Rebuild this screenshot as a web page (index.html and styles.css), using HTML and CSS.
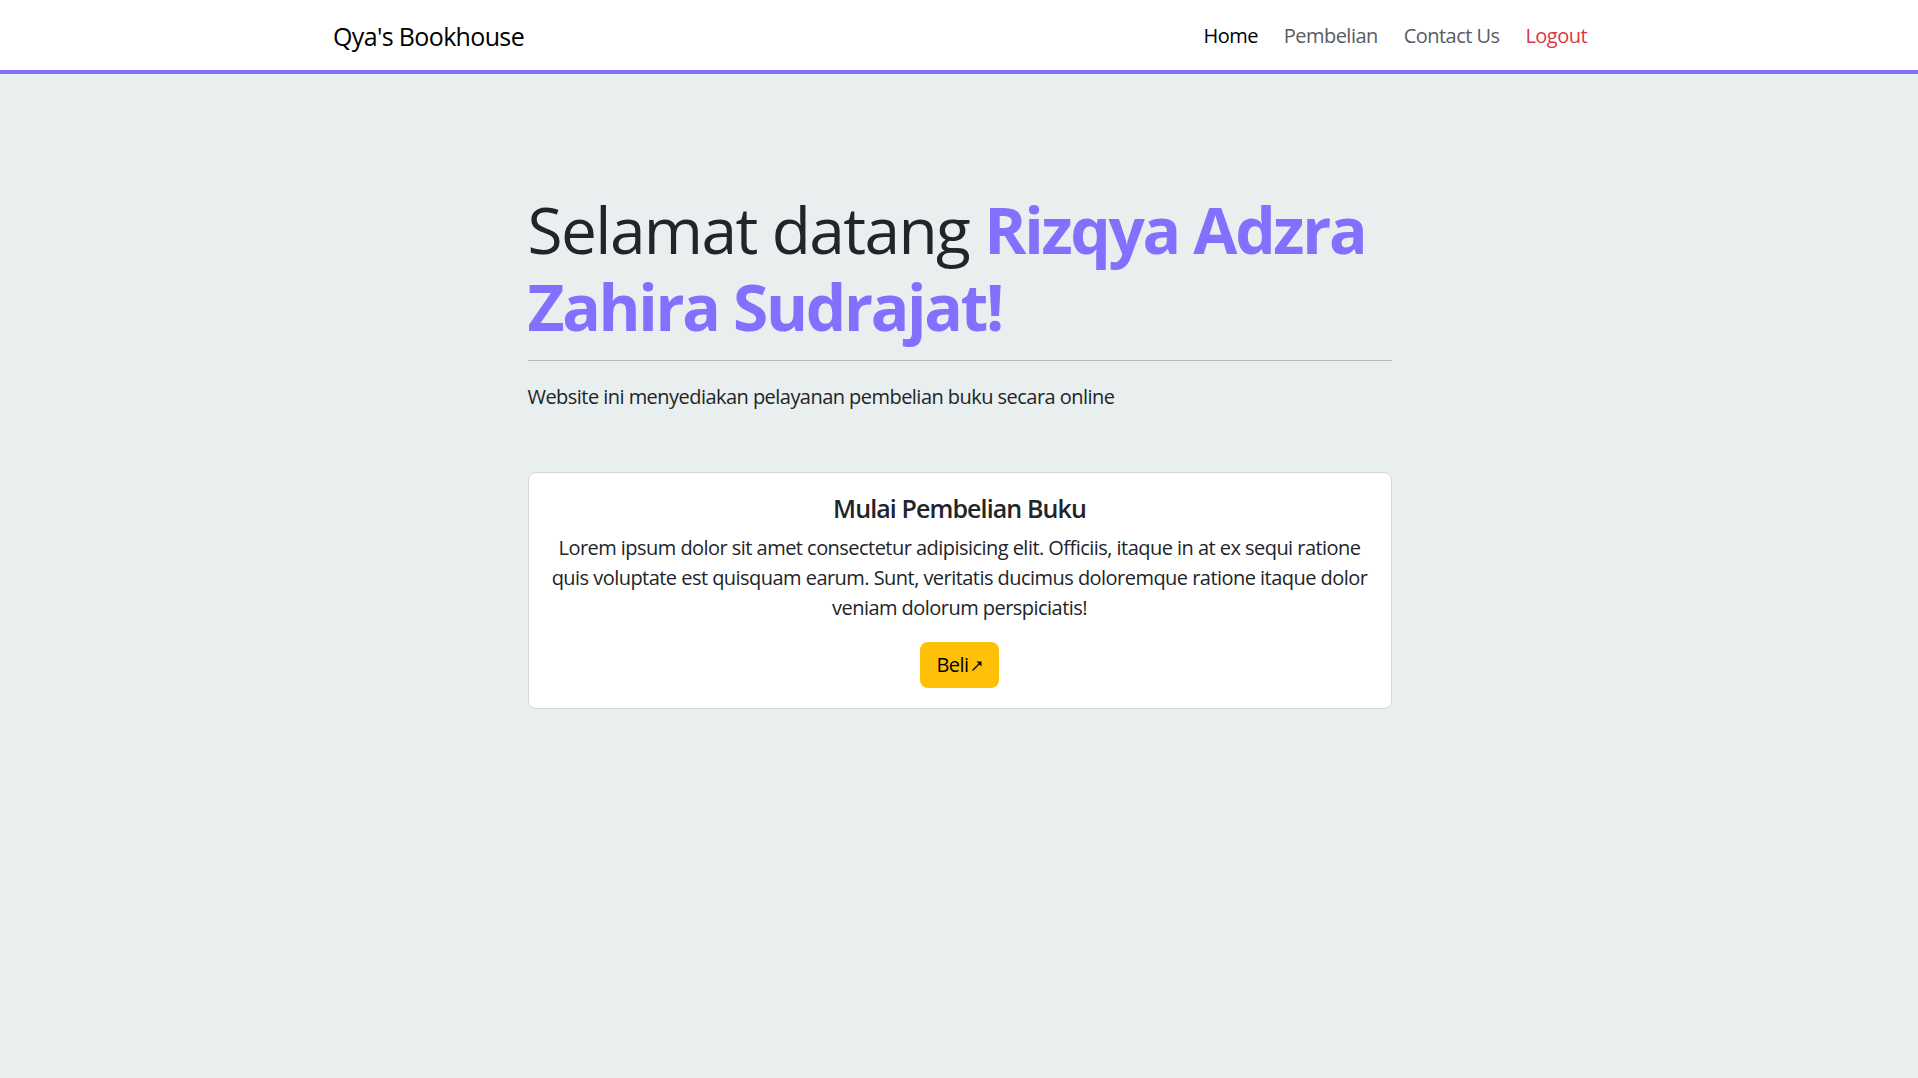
FILE: index.html
```html
<!DOCTYPE html>
<html lang="id">
<head>
<meta charset="utf-8">
<title>Qya's Bookhouse</title>
<link rel="stylesheet" href="styles.css">
</head>
<body>
<nav class="navbar">
  <div class="nav-container">
    <a class="brand" href="#">Qya's Bookhouse</a>
    <ul class="nav-links">
      <li><a class="nav-link active" href="#">Home</a></li>
      <li><a class="nav-link" href="#">Pembelian</a></li>
      <li><a class="nav-link" href="#">Contact Us</a></li>
      <li><a class="nav-link logout" href="#">Logout</a></li>
    </ul>
  </div>
</nav>
<main class="hero">
  <h1 class="hero-title">Selamat datang <span class="name">Rizqya Adzra Zahira Sudrajat!</span></h1>
  <hr class="divider">
  <p class="lead-text">Website ini menyediakan pelayanan pembelian buku secara online</p>
  <section class="card">
    <h5 class="card-title">Mulai Pembelian Buku</h5>
    <p class="card-text">Lorem ipsum dolor sit amet consectetur adipisicing elit. Officiis, itaque in at ex sequi ratione quis voluptate est quisquam earum. Sunt, veritatis ducimus doloremque ratione itaque dolor veniam dolorum perspiciatis!</p>
    <a class="btn-buy" href="#">Beli<svg class="arrow" viewBox="0 0 12 12" width="12" height="12" aria-hidden="true"><path d="M1.5 10.5 L9 3" stroke="#000" stroke-width="1.2" fill="none"/><path d="M5.5 1.5 H10.5 V6.5 Z" fill="#000"/></svg></a>
  </section>
</main>
</body>
</html>
```
FILE: styles.css
```css
html, body {
  margin: 0;
  padding: 0;
}
body {
  background: #e9eeee;
  color: #212529;
  font-family: "Open Sans", "Segoe UI", sans-serif;
  font-size: 20px;
  line-height: 30px;
  letter-spacing: -0.027em;
  min-height: 1078px;
}
a { text-decoration: none; }

.navbar {
  background: #ffffff;
  border-bottom: 4px solid #8470ff;
  height: 70px;
}
.nav-container {
  max-width: 1254px;
  margin: 0 auto;
  height: 70px;
  display: flex;
  align-items: center;
  justify-content: space-between;
  transform: translateX(1px);
}
.brand {
  font-size: 25px;
  line-height: 36px;
  letter-spacing: -0.026em;
  color: #000;
  margin-top: 1px;
}
.nav-links {
  list-style: none;
  margin: 0;
  padding: 0;
  display: flex;
  gap: 26px;
  margin-top: 1px;
}
.nav-link {
  color: #585c61;
  font-size: 20px;
  line-height: 30px;
}
.nav-link.active { color: #000; }
.nav-link.logout { color: #dc3545; }

.hero {
  width: 864px;
  margin: 0 auto;
  padding: 117px 0 0 1px;
}
.hero-title {
  margin: 0;
  font-size: 64px;
  line-height: 77px;
  font-weight: 400;
  letter-spacing: -0.025em;
  color: #212529;
}
.name {
  color: #8470ff;
  font-weight: 700;
  letter-spacing: -0.036em;
}
.divider {
  margin: 15px 0 21px;
  border: 0;
  border-top: 1px solid #b7bbbc;
}
.lead-text {
  margin: 0;
}
.card {
  margin-top: 60px;
  background: #fff;
  border: 1px solid #d3d6d8;
  border-radius: 8px;
  padding: 20px;
  text-align: center;
}
.card-title {
  margin: 0 0 10px;
  font-size: 25px;
  line-height: 30px;
  font-weight: 600;
  letter-spacing: -0.036em;
}
.card-text {
  margin: 0 0 19px;
}
.btn-buy {
  display: inline-flex;
  align-items: center;
  height: 46px;
  padding: 0 16px;
  box-sizing: border-box;
  background: #ffc107;
  border-radius: 8px;
  color: #000;
  font-size: 20px;
}
.arrow {
  margin-left: 2px;
  margin-top: 1px;
}
```
